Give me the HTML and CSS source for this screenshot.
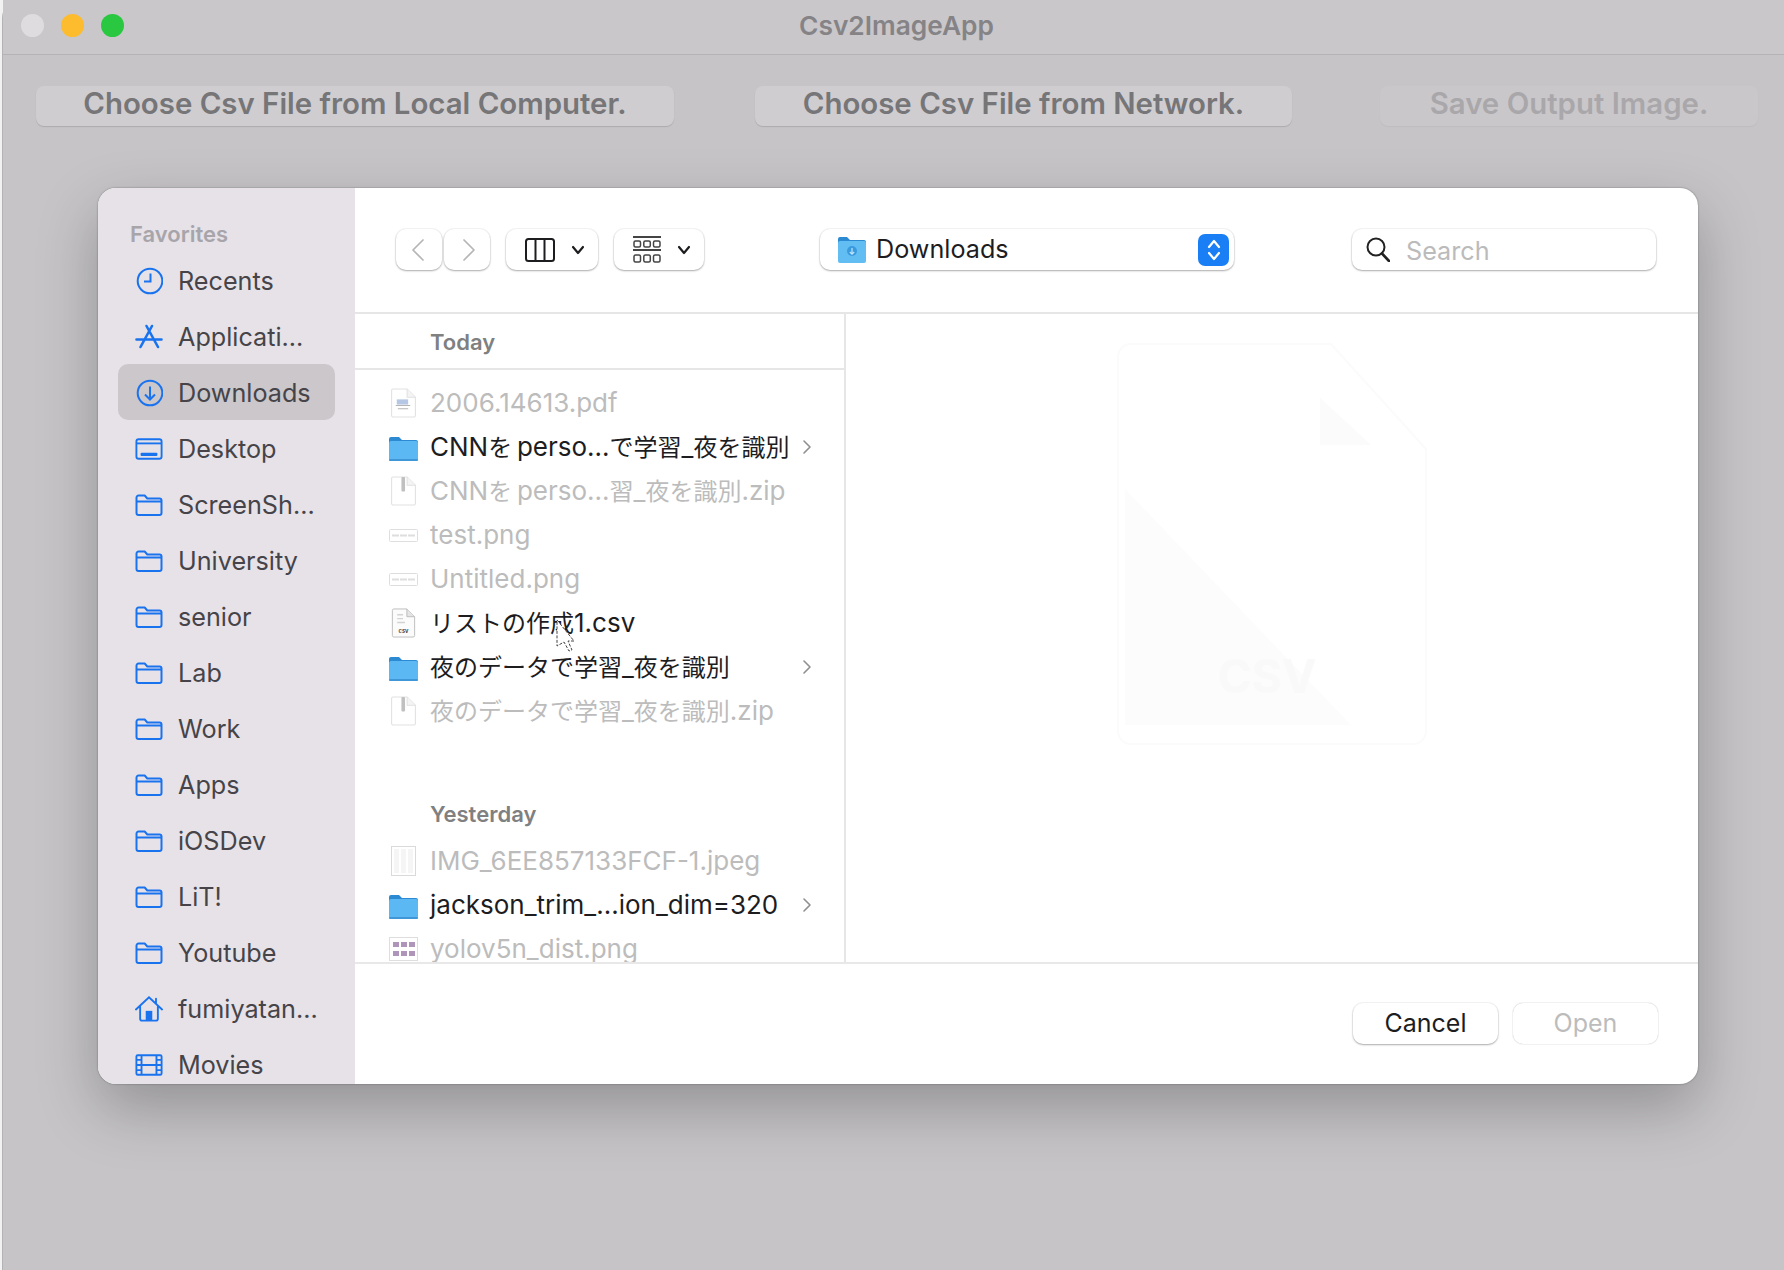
FILE: index.html
```html
<!DOCTYPE html>
<html lang="ja">
  <head>
    <meta charset="UTF-8" />
    <title>Csv2ImageApp</title>
    <link rel="stylesheet" href="styles.css">
  </head>
  <body>
    <svg class="defs" width="0" height="0">
      <symbol id="i-folder" viewBox="0 0 28 22">
        <path d="M1.500 19V3.500a2 2 0 0 1 2-2h6.200l2.600 3h12.200a2 2 0 0 1 2 2V19a2 2 0 0 1-2 2H3.500a2 2 0 0 1-2-2zM1.500 7.500h25" fill="none" stroke="currentColor" stroke-width="2" stroke-linejoin="round"/>
      </symbol>
      <symbol id="i-bigfolder" viewBox="0 0 29 27">
        <path d="M0 5a2 2 0 0 1 2-2h8l3 3h14a2 2 0 0 1 2 2v4H0z" fill="#2b8ad2"/>
        <rect x="0" y="7" width="29" height="20" rx="2" fill="#5bb8f2"/>
        <rect x="0" y="25" width="29" height="2" rx="1" fill="#3f97d8"/>
      </symbol>
      <symbol id="i-doc" viewBox="0 0 25 29">
        <path d="M1 2.500a1.500 1.500 0 0 1 1.500-1.500H16l8 8v17.500a1.500 1.500 0 0 1-1.500 1.500h-20a1.500 1.500 0 0 1-1.500-1.500z" fill="#fff" stroke="#c9c9c9"/>
        <path d="M16 1v8h8" fill="#ececec" stroke="#c9c9c9"/>
      </symbol>
      <symbol id="i-zip" viewBox="0 0 25 29">
        <use href="#i-doc" width="25" height="29"/>
        <rect x="10.500" y="1" width="3.500" height="14" rx="1" fill="#8d8d8d"/>
      </symbol>
      <symbol id="i-wide" viewBox="0 0 29 13">
        <rect x=".5" y=".5" width="28" height="12" rx="1" fill="#fff" stroke="#c4c4c4"/>
        <path d="M3 6.500h23" stroke="#c4c4c4" stroke-width="2" stroke-dasharray="7 1"/>
      </symbol>
      <symbol id="i-chev" viewBox="0 0 10 16">
        <path d="M2 2l6 6-6 6" fill="none" stroke="#8f8f8f" stroke-width="1.600" stroke-linecap="round" stroke-linejoin="round"/>
      </symbol>
      <symbol id="i-down" viewBox="0 0 14 10">
        <path d="M2 2l5 6 5-6" fill="none" stroke="#1d1d1f" stroke-width="2.200" stroke-linecap="round" stroke-linejoin="round"/>
      </symbol>
    </svg>

    <div class="window">
      <header class="titlebar">
        <div class="lights">
          <span class="light off"></span>
          <span class="light yellow"></span>
          <span class="light green"></span>
        </div>
        <div class="app-title">Csv2ImageApp</div>
      </header>

      <div class="actions">
        <button class="action first">Choose Csv File from Local Computer.</button>
        <button class="action second">Choose Csv File from Network.</button>
        <button class="action third off">Save Output Image.</button>
      </div>

      <div class="sheet">
        <aside class="sidebar">
          <div class="side-title">Favorites</div>
          <div class="side-row">
            <svg class="side-icon" viewBox="-1 0 28 28"><circle cx="14" cy="14" r="12.300" fill="none" stroke="currentColor" stroke-width="2"/><path d="M14.500 6.500v8H8" fill="none" stroke="currentColor" stroke-width="2"/></svg>
            Recents
          </div>
          <div class="side-row">
            <svg class="side-icon" viewBox="0 0 28 28"><path d="M11.500 3l11.500 21M17 3L5.500 24M1.500 16.500h25" fill="none" stroke="currentColor" stroke-width="2.600" stroke-linecap="round"/></svg>
            Applicati...
          </div>
          <div class="side-row selected">
            <svg class="side-icon" viewBox="-1 0 28 28"><circle cx="14" cy="14" r="12.300" fill="none" stroke="currentColor" stroke-width="2"/><path d="M14 7.500v12.500M9 15.500l5 5 5-5" fill="none" stroke="currentColor" stroke-width="2"/></svg>
            Downloads
          </div>
          <div class="side-row">
            <svg class="side-icon" viewBox="0 0 30 24"><rect x="1.500" y="1.500" width="27" height="21" rx="2.500" fill="none" stroke="currentColor" stroke-width="2"/><path d="M1.500 6h27" stroke="currentColor" stroke-width="2"/><rect x="6" y="16" width="18" height="3.500" rx="1" fill="currentColor"/></svg>
            Desktop
          </div>
          <div class="side-row"><svg class="side-icon folder"><use href="#i-folder"/></svg>ScreenSh...</div>
          <div class="side-row"><svg class="side-icon folder"><use href="#i-folder"/></svg>University</div>
          <div class="side-row"><svg class="side-icon folder"><use href="#i-folder"/></svg>senior</div>
          <div class="side-row"><svg class="side-icon folder"><use href="#i-folder"/></svg>Lab</div>
          <div class="side-row"><svg class="side-icon folder"><use href="#i-folder"/></svg>Work</div>
          <div class="side-row"><svg class="side-icon folder"><use href="#i-folder"/></svg>Apps</div>
          <div class="side-row"><svg class="side-icon folder"><use href="#i-folder"/></svg>iOSDev</div>
          <div class="side-row"><svg class="side-icon folder"><use href="#i-folder"/></svg>LiT!</div>
          <div class="side-row"><svg class="side-icon folder"><use href="#i-folder"/></svg>Youtube</div>
          <div class="side-row">
            <svg class="side-icon" viewBox="0 0 30 28"><path d="M1 14.500L15 1.500l14 13M5.500 11.500v13a2 2 0 0 0 2 2h15a2 2 0 0 0 2-2v-13M22.500 3v5" fill="none" stroke="currentColor" stroke-width="2" stroke-linecap="round"/><rect x="11.500" y="16" width="7" height="10" fill="currentColor"/></svg>
            fumiyatan...
          </div>
          <div class="side-row">
            <svg class="side-icon" viewBox="0 0 30 24"><rect x="1.500" y="1.500" width="27" height="21" rx="1.500" fill="none" stroke="currentColor" stroke-width="2"/><path d="M7 1.500v21M23 1.500v21M7 12h16M1.500 6.500H7M1.500 12H7M1.500 17.500H7M23 6.500h5.500M23 12h5.500M23 17.500h5.500" fill="none" stroke="currentColor" stroke-width="2"/></svg>
            Movies
          </div>
        </aside>

        <section class="panel">
          <div class="toolbar">
            <button class="tool nav">
              <svg class="nav-icon" viewBox="0 0 12 22"><path d="M11 1L1 11l10 10" fill="none" stroke="#b5b5b5" stroke-width="1.700" stroke-linecap="round" stroke-linejoin="round"/></svg>
            </button>
            <button class="tool nav next">
              <svg class="nav-icon" viewBox="0 0 12 22"><path d="M1 1l10 10L1 21" fill="none" stroke="#b5b5b5" stroke-width="1.700" stroke-linecap="round" stroke-linejoin="round"/></svg>
            </button>
            <button class="tool view">
              <svg class="view-icon" viewBox="0 0 30 24"><rect x="1" y="1" width="28" height="22" rx="2.500" fill="none" stroke="#1d1d1f" stroke-width="2"/><path d="M10.500 1v22M19.500 1v22" stroke="#1d1d1f" stroke-width="2"/></svg>
              <svg class="down-icon"><use href="#i-down"/></svg>
            </button>
            <button class="tool group">
              <svg class="group-icon" viewBox="0 0 28 27"><path d="M0 1h28M0 14h28" stroke="#444" stroke-width="2"/><g fill="none" stroke="#444" stroke-width="1.500"><rect x="1" y="5" width="6.500" height="6" rx="1.500"/><rect x="10.800" y="5" width="6.500" height="6" rx="1.500"/><rect x="20.500" y="5" width="6.500" height="6" rx="1.500"/><rect x="1" y="19" width="6.500" height="7" rx="1.500"/><rect x="10.800" y="19" width="6.500" height="7" rx="1.500"/><rect x="20.500" y="19" width="6.500" height="7" rx="1.500"/></g></svg>
              <svg class="down-icon"><use href="#i-down"/></svg>
            </button>
            <div class="tool location">
              <svg class="loc-folder" viewBox="0 0 28 27"><path d="M0 3a2 2 0 0 1 2-2h7l3 3h14a2 2 0 0 1 2 2v4H0z" fill="#2b8ad2"/><rect y="5" width="28" height="22" rx="2" fill="#62bdf3"/><circle cx="14" cy="15" r="5" fill="#3a9ade"/><path d="M14 12v6M11.800 16l2.200 2.200 2.200-2.200" fill="none" stroke="#bfe4fb" stroke-width="1.200"/></svg>
              <span class="loc-name">Downloads</span>
              <span class="stepper">
                <svg viewBox="0 0 16 24"><path d="M3 9l5-6 5 6M3 15l5 6 5-6" fill="none" stroke="#fff" stroke-width="2.200" stroke-linecap="round" stroke-linejoin="round"/></svg>
              </span>
            </div>
            <div class="tool search">
              <svg class="search-icon" viewBox="0 0 24 25"><circle cx="10" cy="10" r="8.500" fill="none" stroke="#222" stroke-width="2"/><path d="M16 16.500l7 7.500" stroke="#222" stroke-width="2.600" stroke-linecap="round"/></svg>
              <span class="search-text">Search</span>
            </div>
          </div>

          <div class="browser">
            <div class="files">
              <div class="group-head">Today</div>
              <div class="rows">
                <div class="file muted">
                  <svg class="file-icon doc" viewBox="0 0 25 29"><use href="#i-doc" width="25" height="29"/><rect x="6" y="11" width="11" height="5" fill="#7a9ad0"/><path d="M5 17h14M7 20h10" stroke="#777" stroke-width="1"/></svg>
                  <span>2006.14613.pdf</span>
                </div>
                <div class="file">
                  <svg class="file-icon big"><use href="#i-bigfolder"/></svg>
                  <span>CNN<i class="jp">を</i>&#8201;perso...<i class="jp">で学習</i>_<i class="jp">夜を識別</i></span>
                  <svg class="chev"><use href="#i-chev"/></svg>
                </div>
                <div class="file muted">
                  <svg class="file-icon doc"><use href="#i-zip"/></svg>
                  <span>CNN<i class="jp">を</i>&#8201;perso...<i class="jp">習</i>_<i class="jp">夜を識別</i>.zip</span>
                </div>
                <div class="file muted">
                  <svg class="file-icon wide"><use href="#i-wide"/></svg>
                  <span>test.png</span>
                </div>
                <div class="file muted">
                  <svg class="file-icon wide"><use href="#i-wide"/></svg>
                  <span>Untitled.png</span>
                </div>
                <div class="file">
                  <svg class="file-icon csv" viewBox="0 0 25 31"><path d="M1 2.500a1.500 1.500 0 0 1 1.500-1.500H16l8 8v19.500a1.500 1.500 0 0 1-1.500 1.500h-20a1.500 1.500 0 0 1-1.500-1.500z" fill="#fbfbfb" stroke="#bdbdbd"/><path d="M16 1v8h8" fill="#e4e4e4" stroke="#bdbdbd"/><path d="M6 7h6M6 11h6M6 15h8" stroke="#d2d2d2" stroke-width="1.500"/><text class="csv-label" x="12.500" y="26">csv</text></svg>
                  <span><i class="jp">リストの作成</i>1.csv</span>
                </div>
                <div class="file">
                  <svg class="file-icon big"><use href="#i-bigfolder"/></svg>
                  <span><i class="jp">夜のデータで学習</i>_<i class="jp">夜を識別</i></span>
                  <svg class="chev"><use href="#i-chev"/></svg>
                </div>
                <div class="file muted">
                  <svg class="file-icon doc"><use href="#i-zip"/></svg>
                  <span><i class="jp">夜のデータで学習</i>_<i class="jp">夜を識別</i>.zip</span>
                </div>
              </div>
              <div class="group-head later">Yesterday</div>
              <div class="rows">
                <div class="file muted">
                  <svg class="file-icon doc" viewBox="0 0 25 30"><rect x=".5" y=".5" width="24" height="29" fill="#fff" stroke="#bdbdbd"/><rect x="3" y="3" width="19" height="24" fill="#eee"/><path d="M9 3v24M16 3v24" stroke="#fff" stroke-width="2"/></svg>
                  <span>IMG_6EE857133FCF-1.jpeg</span>
                </div>
                <div class="file">
                  <svg class="file-icon big"><use href="#i-bigfolder"/></svg>
                  <span>jackson_trim_...ion_dim=320</span>
                  <svg class="chev"><use href="#i-chev"/></svg>
                </div>
                <div class="file muted">
                  <svg class="file-icon yolo" viewBox="0 0 29 24"><rect x=".5" y=".5" width="28" height="23" fill="#fff" stroke="#c4c4c4"/><g fill="#6d3f80"><rect x="4" y="5" width="6" height="5"/><rect x="12" y="5" width="6" height="5"/><rect x="20" y="5" width="6" height="5"/><rect x="4" y="14" width="6" height="5"/><rect x="12" y="14" width="6" height="5"/><rect x="20" y="14" width="6" height="5"/></g></svg>
                  <span>yolov5n_dist.png</span>
                </div>
              </div>
              <!-- pointer caught in the capture -->
              <svg class="pointer" viewBox="0 0 22 34"><path d="M2 2l17 21-6 0 4 9-3 1-5-9-7 4z" fill="#fff" stroke="#444" stroke-width="1" stroke-dasharray="3 1.500"/></svg>
            </div>

            <div class="preview">
              <svg class="ghost" viewBox="0 0 310 402">
                <path d="M14 1h200l95 105v282a13 13 0 0 1-13 13H14a13 13 0 0 1-13-13V14A13 13 0 0 1 14 1z" fill="none" stroke="#fbfbfb" stroke-width="2"/>
                <path d="M8 146l226 236H8z" fill="#fcfcfc"/>
                <path d="M203 55l51 47h-51z" fill="#fbfbfb"/>
                <text class="ghost-label" x="150" y="350">CSV</text>
              </svg>
            </div>
          </div>

          <div class="footer">
            <button class="tool foot-btn">Cancel</button>
            <button class="tool foot-btn off">Open</button>
          </div>
        </section>
      </div>
    </div>
  </body>
</html>
```

FILE: styles.css
```css
* {
  box-sizing: border-box;
}

html,
body {
  height: 100%;
}

body {
  margin: 0;
  overflow: hidden;
  background: #f2f2f2;
  color: #1d1d1f;
  font-family: Inter, "Noto Sans CJK JP", sans-serif;
  font-size: 25.2px;
}

button {
  font-family: inherit;
  border: none;
  padding: 0;
}

.defs {
  position: absolute;
}

.window {
  height: 1270px;
  margin-left: 2px;
  background: #c6c4c7;
  border-top-left-radius: 18px;
  border-left: 1px solid #b4b2b5;
}

.titlebar {
  display: grid;
  grid-template-columns: 1fr auto 1fr;
  align-items: center;
  height: 55px;
  padding: 0 24px 3px 18px;
  background: #c9c7ca;
  border-bottom: 1px solid #b5b3b6;
}

.lights {
  display: flex;
  gap: 17px;
}

.light {
  width: 23px;
  height: 23px;
  border-radius: 50%;
}

.light.off {
  background: #dedcdf;
}

.light.yellow {
  background: #fdbb2e;
}

.light.green {
  background: #29c840;
}

.app-title {
  color: #858386;
  font-size: 26.3px;
  font-weight: 600;
  margin-left: 12px;
}

.actions {
  display: flex;
  padding: 31px 0 0 33px;
}

.action {
  height: 40px;
  padding-bottom: 6px;
  background: #cfcdd0;
  border-radius: 8px;
  box-shadow: 0 1px 1px rgba(0, 0, 0, 0.13);
  color: #767577;
  font-size: 29.4px;
  font-weight: 600;
}

.action.first {
  width: 638px;
}

.action.second {
  width: 537px;
  margin-left: 81px;
}

.action.third {
  width: 378px;
  margin-left: 88px;
}

.action.off {
  background: #c9c7ca;
  box-shadow: 0 1px 1px rgba(0, 0, 0, 0.04);
  color: #a9a7aa;
}

.sheet {
  display: flex;
  width: 1600px;
  height: 896px;
  margin: 62px 0 0 95px;
  overflow: hidden;
  background: #fff;
  border-radius: 18px;
  box-shadow: 0 24px 60px rgba(0, 0, 0, 0.26), 0 0 2px rgba(0, 0, 0, 0.4);
}

.sidebar {
  flex: none;
  width: 257px;
  height: 100%;
  padding: 30px 20px 0;
  overflow: hidden;
  background: #e6e2e8;
  color: #464448;
}

.side-title {
  height: 32px;
  margin: 0 0 2px 12px;
  color: #a8a5aa;
  font-size: 22px;
  font-weight: 600;
  line-height: 32px;
}

.side-row {
  display: flex;
  align-items: center;
  height: 56px;
  padding: 2px 0 0 17px;
  border-radius: 10px;
}

.side-row.selected {
  background: #cbc7cb;
}

.side-icon {
  flex: none;
  width: 28px;
  height: 28px;
  margin-right: 15px;
  color: #1a73ee;
}

.side-icon.folder {
  height: 22px;
}

.panel {
  display: flex;
  flex: 1;
  flex-direction: column;
  min-width: 0;
}

.toolbar {
  display: flex;
  flex: none;
  align-items: flex-start;
  height: 126px;
  padding: 41px 0 0 41px;
  border-bottom: 2px solid #e6e6e6;
}

.tool {
  display: flex;
  align-items: center;
  height: 41px;
  background: #fff;
  border-radius: 10px;
  box-shadow: 0 1px 2px rgba(0, 0, 0, 0.3), 0 0 0 1px rgba(0, 0, 0, 0.04);
}

.nav {
  justify-content: center;
  width: 46px;
  padding-right: 2px;
}

.nav.next {
  margin-left: 2px;
  padding: 0 0 0 3px;
}

.nav-icon {
  width: 12px;
  height: 22px;
}

.view {
  width: 92px;
  margin-left: 16px;
  padding-left: 19px;
}

.view-icon {
  width: 30px;
  height: 24px;
  margin-right: 16px;
}

.down-icon {
  width: 14px;
  height: 10px;
}

.group {
  width: 90px;
  margin-left: 16px;
  padding-left: 19px;
}

.group-icon {
  width: 28px;
  height: 27px;
  margin-right: 16px;
}

.location {
  width: 414px;
  margin-left: 116px;
  padding: 0 5px 0 18px;
}

.loc-folder {
  width: 28px;
  height: 27px;
  margin-right: 10px;
}

.loc-name {
  flex: 1;
  margin-top: -2px;
}

.stepper {
  display: flex;
  align-items: center;
  justify-content: center;
  width: 31px;
  height: 32px;
  background: #1a7ff5;
  border-radius: 7px;
}

.stepper svg {
  width: 16px;
  height: 24px;
}

.search {
  width: 304px;
  margin-left: 118px;
  padding-left: 14px;
}

.search-icon {
  width: 24px;
  height: 25px;
  margin-right: 16px;
}

.search-text {
  margin-top: 2px;
  color: #bbb;
}

.browser {
  display: flex;
  flex: 1;
  min-height: 0;
}

.files {
  position: relative;
  flex: none;
  width: 491px;
  overflow: hidden;
  border-right: 2px solid #e6e6e6;
}

.group-head {
  height: 56px;
  padding: 12px 0 0 75px;
  border-bottom: 2px solid #e6e6e6;
  color: #808081;
  font-size: 22px;
  font-weight: 600;
  line-height: 32px;
}

.group-head.later {
  height: 106px;
  padding-top: 65px;
  border-bottom: none;
}

.group-head + .rows {
  margin-top: 11px;
}

.group-head.later + .rows {
  margin-top: 0;
}

.file {
  display: flex;
  align-items: center;
  height: 44px;
  padding-left: 34px;
  font-size: 26px;
  line-height: 26px;
  white-space: nowrap;
}

.file.muted {
  color: #bcbcbc;
}

.file.muted .file-icon {
  opacity: 0.55;
}

.jp {
  font-size: 24px;
  font-style: normal;
}

.file-icon {
  flex: none;
  width: 29px;
  margin-right: 12px;
}

.file-icon.big {
  height: 27px;
}

.file-icon.doc,
.file-icon.csv {
  height: 30px;
}

.file-icon.wide {
  height: 13px;
}

.file-icon.yolo {
  height: 24px;
}

.csv-label {
  fill: #333;
  font-size: 6px;
  font-weight: 600;
  text-anchor: middle;
}

.chev {
  width: 10px;
  height: 16px;
  position: absolute;
  left: 447px;
}

.pointer {
  position: absolute;
  left: 200px;
  top: 304px;
  width: 22px;
  height: 34px;
}

.preview {
  display: flex;
  flex: 1;
  justify-content: center;
  padding: 29px 0 0 0;
}

.ghost {
  width: 310px;
  height: 402px;
}

.ghost-label {
  fill: #f9f9f9;
  font-size: 46px;
  font-weight: 700;
  text-anchor: middle;
}

.footer {
  display: flex;
  flex: none;
  justify-content: flex-end;
  gap: 15px;
  height: 122px;
  padding: 39px 40px 0 0;
  border-top: 2px solid #e8e8e8;
}

.foot-btn {
  justify-content: center;
  width: 145px;
  height: 41px;
  padding-bottom: 2px;
  color: #1d1d1f;
  font-size: 25px;
}

.foot-btn.off {
  box-shadow: 0 0 1px rgba(0, 0, 0, 0.25), 0 0 0 1px rgba(0, 0, 0, 0.03);
  color: #bcbcbc;
}
```
